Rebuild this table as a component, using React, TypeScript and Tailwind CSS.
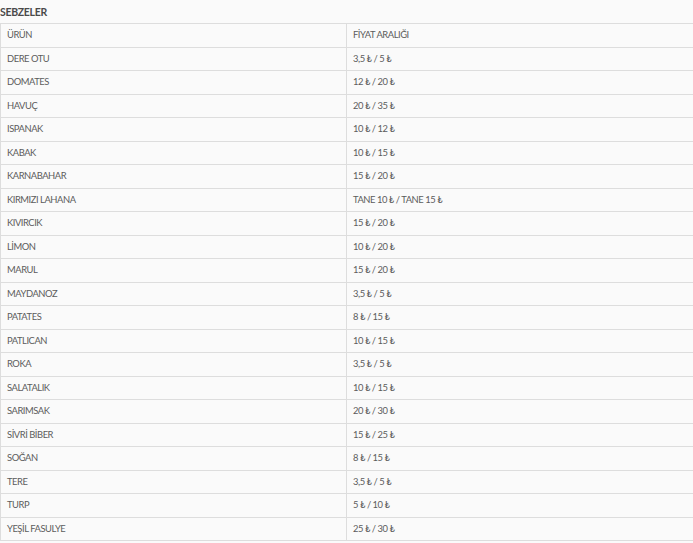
const rows: [string, string][] = [
  ["DERE OTU", "3,5 ₺ / 5 ₺"],
  ["DOMATES", "12 ₺ / 20 ₺"],
  ["HAVUÇ", "20 ₺ / 35 ₺"],
  ["ISPANAK", "10 ₺ / 12 ₺"],
  ["KABAK", "10 ₺ / 15 ₺"],
  ["KARNABAHAR", "15 ₺ / 20 ₺"],
  ["KIRMIZI LAHANA", "TANE 10 ₺ / TANE 15 ₺"],
  ["KIVIRCIK", "15 ₺ / 20 ₺"],
  ["LİMON", "10 ₺ / 20 ₺"],
  ["MARUL", "15 ₺ / 20 ₺"],
  ["MAYDANOZ", "3,5 ₺ / 5 ₺"],
  ["PATATES", "8 ₺ / 15 ₺"],
  ["PATLICAN", "10 ₺ / 15 ₺"],
  ["ROKA", "3,5 ₺ / 5 ₺"],
  ["SALATALIK", "10 ₺ / 15 ₺"],
  ["SARIMSAK", "20 ₺ / 30 ₺"],
  ["SİVRİ BİBER", "15 ₺ / 25 ₺"],
  ["SOĞAN", "8 ₺ / 15 ₺"],
  ["TERE", "3,5 ₺ / 5 ₺"],
  ["TURP", "5 ₺ / 10 ₺"],
  ["YEŞİL FASULYE", "25 ₺ / 30 ₺"],
];

// Price table for vegetables
const App = () => {
  return (
    <div className="w-[693px] h-[543px] overflow-hidden bg-[#fafafa] text-[#5c5c5c] font-['Lato','Liberation_Sans',sans-serif] text-[9.4px] tracking-[-0.45px]">
      <div className="h-[23px] flex items-center font-bold text-[#4a4a4a] text-[10.5px] tracking-[-0.3px] pt-[3px]">
        SEBZELER
      </div>
      {/* Table */}
      <div className="w-[720px] border-l border-t border-[#ddd]">
        <div className="grid grid-cols-[346px_1fr] h-[23.5px] border-b border-[#ddd]">
          <div className="pl-[6px] flex items-center border-r border-[#ddd]">ÜRÜN</div>
          <div className="pl-[6px] flex items-center">FİYAT ARALIĞI</div>
        </div>
        {rows.map(([name, price]) => (
          <div key={name} className="grid grid-cols-[346px_1fr] h-[23.5px] border-b border-[#ddd]">
            <div className="pl-[6px] flex items-center border-r border-[#ddd]">{name}</div>
            <div className="pl-[6px] flex items-center">{price}</div>
          </div>
        ))}
      </div>
    </div>
  );
};

export default App;
